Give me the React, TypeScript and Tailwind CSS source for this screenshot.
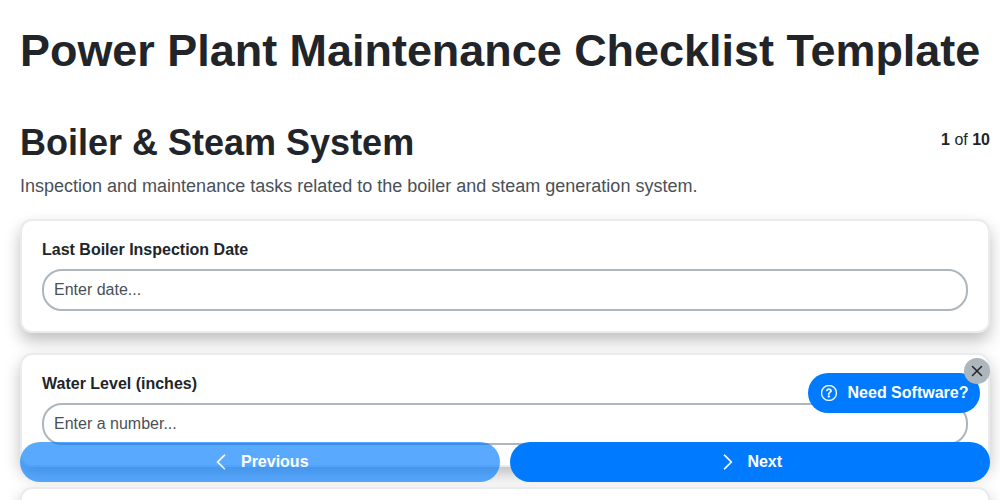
import { BsChevronLeft, BsChevronRight, BsQuestionCircle } from "react-icons/bs";
import { X } from "lucide-react";

function Field({ label, placeholder }: { label: string; placeholder: string }) {
  return (
    <div className="bg-white border-2 border-[#e9ecef] rounded-xl px-5 pt-[18px] pb-[20px] mb-5 shadow-[0_8px_16px_rgba(0,0,0,0.25)]">
      <label className="block text-base leading-[22px] font-bold text-[#212529] mb-[8px]">{label}</label>
      <input
        readOnly
        placeholder={placeholder}
        className="block w-full h-[42px] bg-white border-2 border-[#adb5bd] rounded-[20px] px-[10px] text-base text-[#212529] placeholder:text-[#495057] outline-none"
      />
    </div>
  );
}

export default function App() {
  return (
    <div className="h-screen overflow-hidden bg-white font-['Liberation_Sans',Arial,sans-serif] text-[#212529] pl-5 pr-[10px]">
      <h1 className="text-[44.93px] leading-[55px] font-bold pt-[23px] whitespace-nowrap">
        Power Plant Maintenance Checklist Template
      </h1>
      <div className="flex items-start justify-between mt-[43px]">
        <h2 className="text-[36px] leading-[43px] font-bold">Boiler &amp; Steam System</h2>
        <div className="text-base leading-[18px] pt-[10px]">
          <strong>1</strong> of <strong>10</strong>
        </div>
      </div>
      <p className="text-lg leading-[22px] text-[#495057] mt-[11px] mb-[22px]">
        Inspection and maintenance tasks related to the boiler and steam generation system.
      </p>
      <Field label="Last Boiler Inspection Date" placeholder="Enter date..." />
      <Field label="Water Level (inches)" placeholder="Enter a number..." />
      <div className="h-[113px] bg-white border-2 border-[#e9ecef] rounded-xl shadow-[0_8px_16px_rgba(0,0,0,0.25)]" />

      <div className="fixed left-5 right-[10px] bottom-[18px] flex gap-[10px]">
        <button className="flex-1 h-10 rounded-[20px] bg-[#007bff] opacity-65 text-white text-base font-bold flex items-center justify-center gap-[11px] pl-[1px]">
          <BsChevronLeft size={18} className="stroke-[0.6]" />
          Previous
        </button>
        <button className="flex-1 h-10 rounded-[20px] bg-[#007bff] text-white text-base font-bold flex items-center justify-center gap-[10px] pl-[2px]">
          <BsChevronRight size={18} className="stroke-[0.6]" />
          Next
        </button>
      </div>

      <button className="fixed left-[808px] top-[373px] w-[172px] h-10 rounded-[20px] bg-[#007bff] text-white text-base font-bold flex items-center justify-center gap-[11px] pl-[1px]">
        <BsQuestionCircle size={16} className="stroke-[0.4]" />
        Need Software?
      </button>
      <button className="fixed left-[964px] top-[358px] w-[26px] h-[26px] rounded-full bg-[#adb5bd] text-[#212529] flex items-center justify-center">
        <X className="w-[18px] h-[18px]" strokeWidth={2} />
      </button>
    </div>
  );
}
